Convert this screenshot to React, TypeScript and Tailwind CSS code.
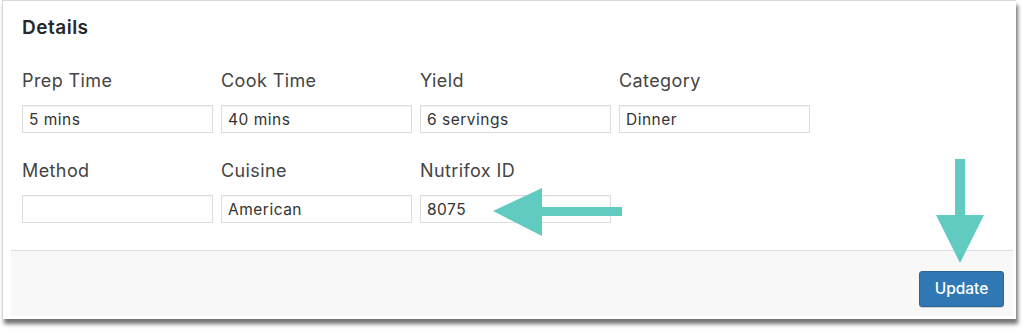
import React from "react";

const font = { fontFamily: "Inter, 'Liberation Sans', Arial, sans-serif" };

function Field({ label, value }: { label: string; value: string }) {
  return (
    <div className="flex flex-col w-[191px]">
      <div className="h-[20px] leading-[20px] text-[18px] tracking-[0.4px] text-[#444]">{label}</div>
      <div className="mt-[14px] h-[28px] border border-[#dcdcdc] bg-white flex items-center px-[6px] pt-[2px] text-[15.5px] tracking-[0.5px] text-[#333] shadow-[inset_0_1px_1px_rgba(0,0,0,0.04)]">
        {value}
      </div>
    </div>
  );
}

export default function App() {
  return (
    <div className="w-[1024px] h-[336px] bg-white relative overflow-hidden" style={font}>
      <div className="ml-[2px] w-[1014px] h-[319px] bg-white border-l border-t border-[#d8d8d8] shadow-[2px_5px_4px_rgba(0,0,0,0.55)] pl-[8px] pr-[3px] pb-[3px] flex flex-col">
        <div className="flex-1 flex flex-col">
          <div className="pl-[11px] pt-[16px]">
            <div className="h-[22px] leading-[22px] text-[19px] tracking-[0.5px] font-semibold text-[#23282d]">Details</div>
            <div className="mt-[32px] flex gap-[8px]">
              <Field label="Prep Time" value="5 mins" />
              <Field label="Cook Time" value="40 mins" />
              <Field label="Yield" value="6 servings" />
              <Field label="Category" value="Dinner" />
            </div>
            <div className="mt-[28px] flex gap-[8px]">
              <Field label="Method" value="" />
              <Field label="Cuisine" value="American" />
              <Field label="Nutrifox ID" value="8075" />
            </div>
          </div>
          <div className="mt-[27px] flex-1 bg-[#f8f8f8] border-t border-[#dedede] flex justify-end items-start pt-[20px] pr-[9px]">
            <button className="w-[85px] h-[36px] rounded-[3px] bg-[#2f78b4] border border-[#25669c] text-white text-[15.5px] font-medium shadow-[0_1px_0_rgba(0,0,0,0.15)]">
              Update
            </button>
          </div>
        </div>
      </div>

      <svg className="absolute left-[490px] top-[185px]" width="136" height="54" viewBox="0 0 136 54">
        <polygon points="3,26 52,3 52,22 132,22 132,31 52,31 52,51" fill="#62cbc1" />
      </svg>
      <svg className="absolute left-[934px] top-[157px]" width="54" height="110" viewBox="0 0 54 110">
        <polygon points="21,2 31,2 31,58 50,58 26,106 2,58 21,58" fill="#62cbc1" />
      </svg>
    </div>
  );
}
